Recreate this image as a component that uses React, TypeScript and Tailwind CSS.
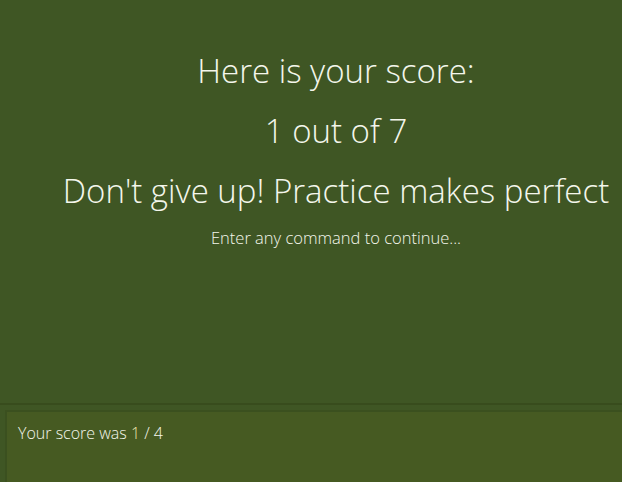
export default function App() {
  return (
    <div
      className="flex flex-col h-[482px] w-[622px] overflow-hidden bg-[#3f5624] text-[#f4f6ec]"
      style={{ fontFamily: '"Open Sans", "Noto Sans", sans-serif' }}
    >
      {/* score area */}
      <div className="flex flex-col items-center h-[403px] pl-[50px] pt-[49px]">
        <h1 className="text-[33px] font-light leading-[44px]">Here is your score:</h1>
        <h2 className="text-[33px] font-light leading-[44px] mt-[16px]">1 out of 7</h2>
        <h2 className="text-[33px] font-light leading-[44px] mt-[16px] whitespace-nowrap">
          Don't give up! Practice makes perfect
        </h2>
        <p className="text-[16.5px] font-light mt-[13px]">Enter any command to continue...</p>
      </div>

      {/* console */}
      <div className="flex-1 border-t-2 border-[#384c1d] pt-[5px] pl-[5px]">
        <div className="h-full border-t-2 border-l-2 border-[#3b501f] bg-[#465a22] px-[11px] pt-[9px]">
          <p className="text-[16px] font-light">
            Your score was <span className="text-[#eee5b0]">1</span> / 4
          </p>
        </div>
      </div>
    </div>
  )
}
